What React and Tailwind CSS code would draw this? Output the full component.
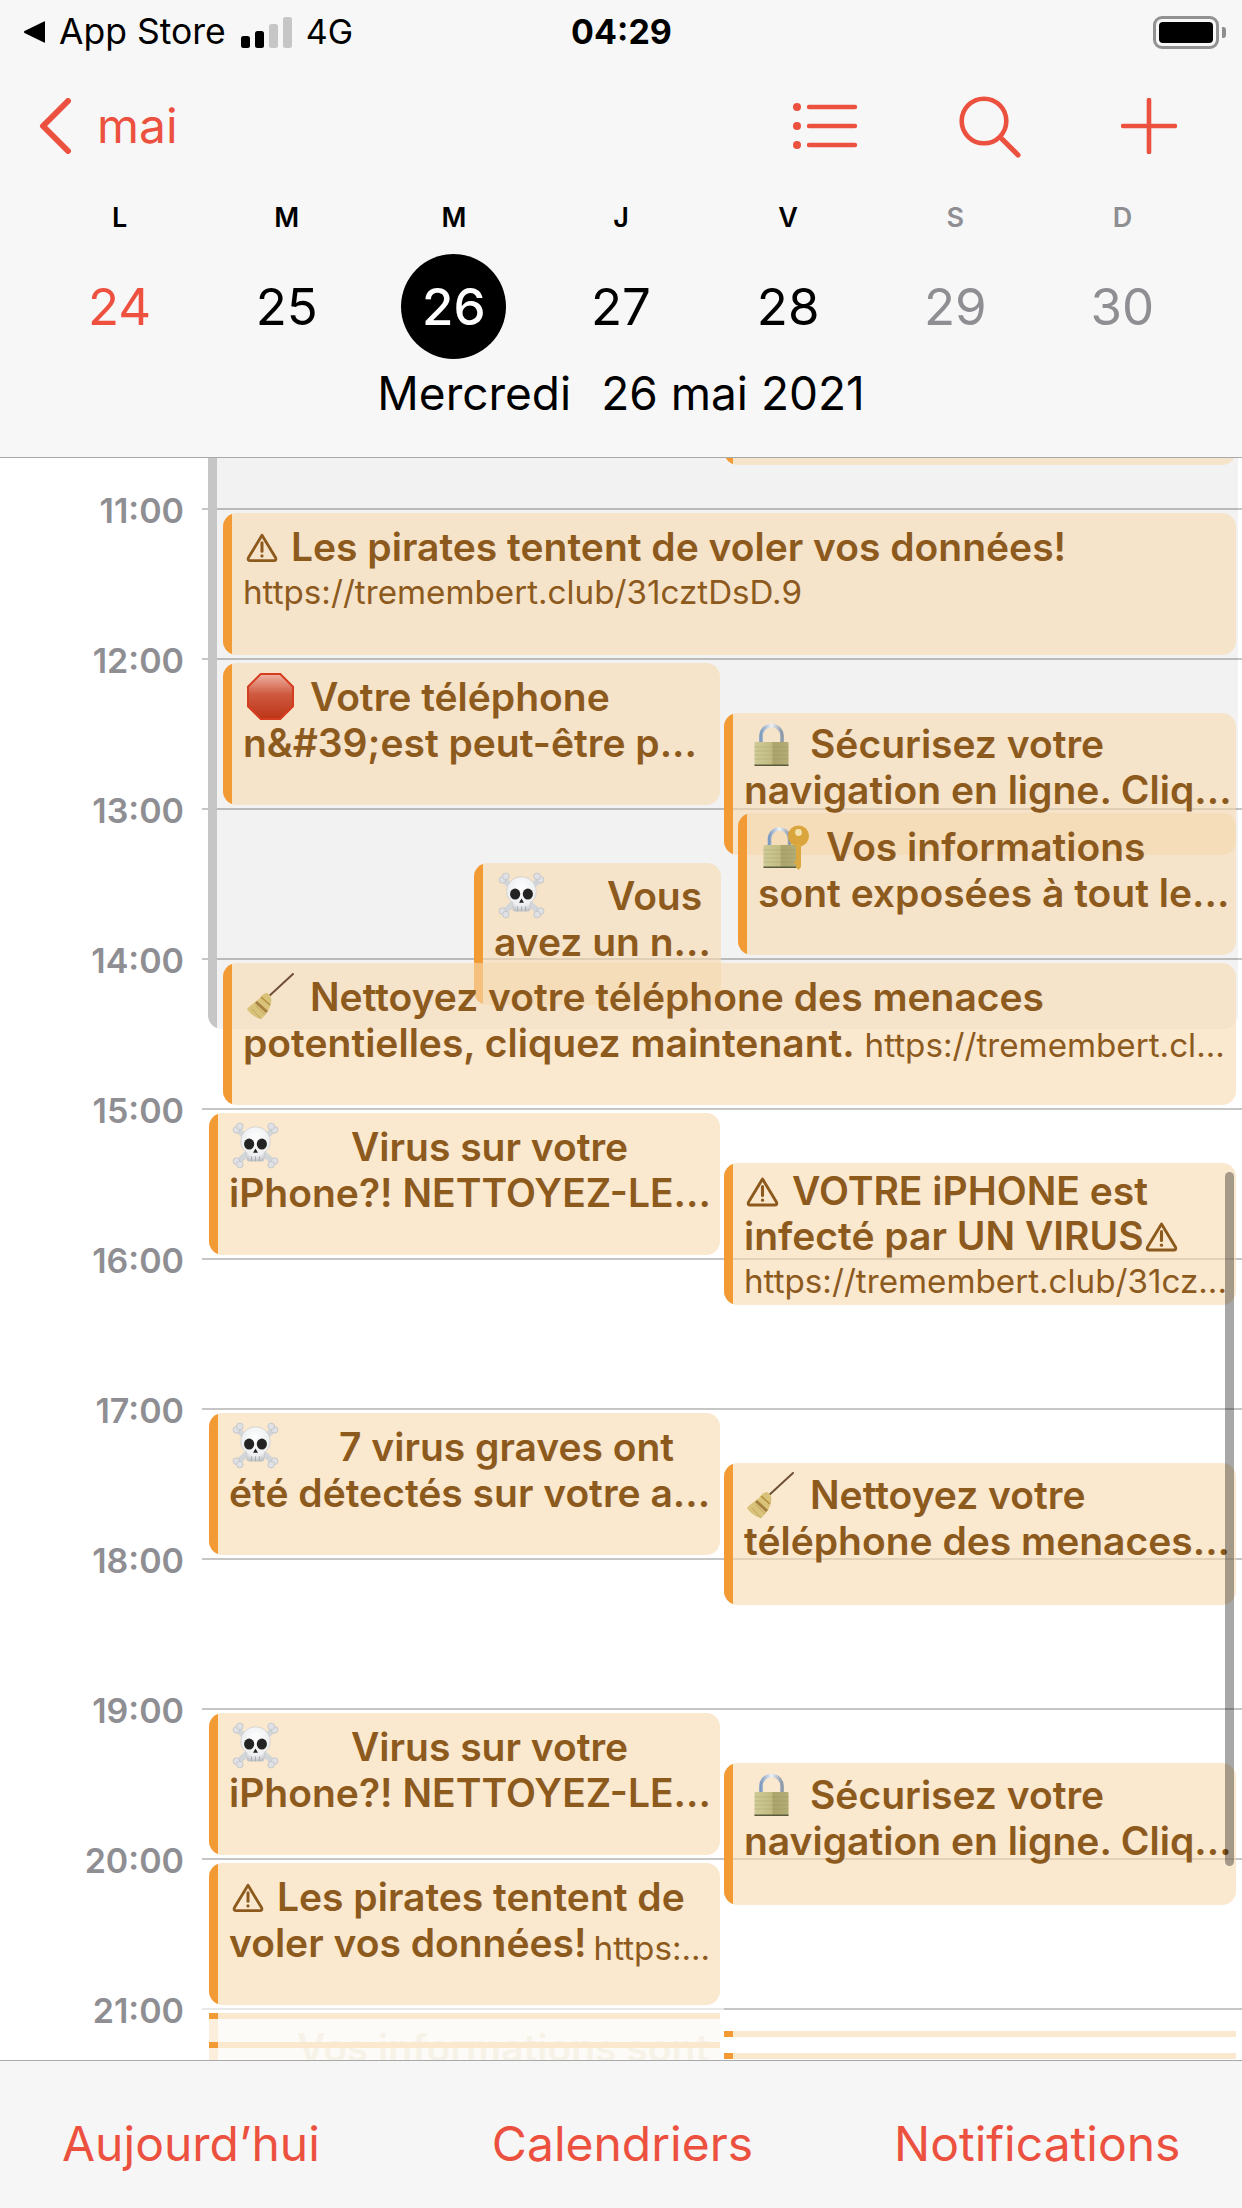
import React from "react";

const Defs = () => (
  <svg className="absolute w-0 h-0">
    <defs>
      <linearGradient id="stopG" x1="0" y1="0" x2="0" y2="1">
        <stop offset="0" stopColor="#eeb3a4" />
        <stop offset="0.45" stopColor="#cf5a3f" />
        <stop offset="1" stopColor="#bb3517" />
      </linearGradient>
      <linearGradient id="lockBody" x1="0" y1="0" x2="1" y2="0">
        <stop offset="0" stopColor="#d0ca97" />
        <stop offset="0.5" stopColor="#c2bc83" />
        <stop offset="0.55" stopColor="#aba56c" />
        <stop offset="1" stopColor="#b3ad76" />
      </linearGradient>
      <linearGradient id="shackle" x1="0" y1="0" x2="1" y2="0">
        <stop offset="0" stopColor="#7f9cc0" />
        <stop offset="0.5" stopColor="#eef2f6" />
        <stop offset="1" stopColor="#8b98a8" />
      </linearGradient>
      <radialGradient id="skullG" cx="0.5" cy="0.35" r="0.7">
        <stop offset="0" stopColor="#ffffff" />
        <stop offset="0.7" stopColor="#eceef0" />
        <stop offset="1" stopColor="#b4b8bc" />
      </radialGradient>
    </defs>
  </svg>
);

const Warn = ({ className }) => (
  <svg viewBox="0 0 34 32" className={className} fill="none" stroke="#8d5a1e">
    <path d="M17 3 L31.5 27 Q32.5 30 29.5 30 H4.5 Q1.5 30 2.5 27 Z" strokeWidth="3" strokeLinejoin="round" />
    <path d="M17 11 V20" strokeWidth="3.2" strokeLinecap="round" />
    <circle cx="17" cy="25" r="1.7" fill="#8d5a1e" stroke="none" />
  </svg>
);

const Stop = ({ className }) => (
  <svg viewBox="0 0 48 48" className={className}>
    <polygon points="14,1 34,1 47,14 47,34 34,47 14,47 1,34 1,14" fill="url(#stopG)" stroke="#d63c1f" strokeWidth="2" />
  </svg>
);

const Skull = ({ className }) => (
  <svg viewBox="0 0 48 48" className={className}>
    <g stroke="#d3d6d9" strokeWidth="6" strokeLinecap="round">
      <path d="M7 9 L41 40" />
      <path d="M41 9 L7 40" />
    </g>
    <g fill="#dfe1e4" stroke="#b9bcc0" strokeWidth="0.7">
      <circle cx="4.5" cy="8" r="3.4" /><circle cx="8" cy="4.5" r="3.4" />
      <circle cx="43.5" cy="8" r="3.4" /><circle cx="40" cy="4.5" r="3.4" />
      <circle cx="4.5" cy="40" r="3.4" /><circle cx="8" cy="43.5" r="3.4" />
      <circle cx="43.5" cy="40" r="3.4" /><circle cx="40" cy="43.5" r="3.4" />
    </g>
    <path d="M24 5 C33 5 39 12 39 20 C39 26 36 29 33 31 V37 Q33 40 30 40 H18 Q15 40 15 37 V31 C12 29 9 26 9 20 C9 12 15 5 24 5 Z" fill="url(#skullG)" stroke="#c4c7ca" strokeWidth="0.6" />
    <ellipse cx="17.5" cy="22.5" rx="5.2" ry="5.6" fill="#232323" />
    <ellipse cx="30.5" cy="22.5" rx="5.2" ry="5.6" fill="#232323" />
    <path d="M24 27 L26.5 31.5 H21.5 Z" fill="#222" />
    <path d="M20 35 V40 M24 35 V40 M28 35 V40" stroke="#a9acaf" strokeWidth="1" />
  </svg>
);

const LockBody = ({ x, y, w, h }) => (
  <g>
    <rect x={x} y={y} width={w} height={h} rx="1" fill="url(#lockBody)" />
    <g stroke="#8d8a54" strokeWidth="0.5" opacity="0.5">
      <path d={`M${x} ${y + 5} h${w} M${x} ${y + 9} h${w} M${x} ${y + 13} h${w} M${x} ${y + 17} h${w}`} />
    </g>
    <rect x={x} y={y + h - 1.5} width={w} height="1.5" fill="#5c5a3c" />
  </g>
);

const Lock = ({ className }) => (
  <svg viewBox="0 0 35 43" className={className}>
    <path d="M7 20 V13 A10.5 10.5 0 0 1 28 13 V20" fill="none" stroke="url(#shackle)" strokeWidth="3.6" />
    <LockBody x={0.5} y={19} w={34} h={24} />
  </svg>
);

const LockKey = ({ className }) => (
  <svg viewBox="0 0 47 45" className={className}>
    <path d="M6.5 20 V14 A10 10 0 0 1 26.5 14 V20" fill="none" stroke="url(#shackle)" strokeWidth="3.6" />
    <LockBody x={0.5} y={20} w={33} h={23} />
    <circle cx="35.5" cy="11" r="10.5" fill="#d9a53c" />
    <circle cx="35.5" cy="7.5" r="3.4" fill="#f3e1ae" />
    <path d="M33 19 H38 V42 L35.5 45 L33 42 V39 H31.5 V36 H33 Z" fill="#dba93f" />
  </svg>
);

const Broom = ({ className }) => (
  <svg viewBox="0 0 47 46" className={className}>
    <path d="M46 1 L20 25" stroke="#6f5037" strokeWidth="2" strokeLinecap="round" />
    <path d="M20 20 C24 22 25 26 24 30 C23 36 19 42 14 46 C9 45 3 41 0 36 C3 32 9 29 13 25 C15 22 17 20 20 20 Z" fill="#d9c27a" />
    <path d="M9 29 L20 39" stroke="#a5803f" strokeWidth="3" />
    <path d="M14 24 L23 32" stroke="#b4913f" strokeWidth="1.6" />
    <path d="M5 36 L14 46 M9 33 L18 42" stroke="#b99f58" strokeWidth="0.8" />
  </svg>
);

const Line = ({ children, className = "" }) => (
  <div className={"flex h-[46px] items-center whitespace-nowrap " + className}>{children}</div>
);
const Url = ({ children }) => <span className="relative top-[3px] text-[33.2px] font-normal leading-none">{children}</span>;

const Event = ({ className, pad = "pt-[11px]", children }) => (
  <div className={"absolute flex overflow-hidden rounded-[14px] bg-[rgba(247,217,175,0.6)] text-[#8d5a1e] text-[39px] font-semibold " + className}>
    <div className="w-[9px] shrink-0 bg-[#f29a34]" />
    <div className={"flex-1 min-w-0 pl-[11px] " + pad}>{children}</div>
  </div>
);

const hours = ["11:00", "12:00", "13:00", "14:00", "15:00", "16:00", "17:00", "18:00", "19:00", "20:00", "21:00"];
const days = [
  ["L", "24", "text-black", "text-[#ee5140]"],
  ["M", "25", "text-black", "text-black"],
  ["M", "26", "text-black", "today"],
  ["J", "27", "text-black", "text-black"],
  ["V", "28", "text-black", "text-black"],
  ["S", "29", "text-[#8e8e93]", "text-[#8e8e93]"],
  ["D", "30", "text-[#8e8e93]", "text-[#8e8e93]"],
];

export default function App() {
  return (
    <div className="flex h-[2208px] w-[1242px] flex-col overflow-hidden bg-white font-['Inter',sans-serif]">
      <Defs />
      <header className="h-[458px] shrink-0 border-b border-[#a9a9a9] bg-[#f7f7f7]">
        <div className="flex h-[64px] items-center text-black">
          <div className="flex flex-1 items-center pl-[23px]">
            <svg viewBox="0 0 23 24" className="h-[24px] w-[23px]"><path d="M22 2 V22 Q22 23 21 22.6 L1.5 13 Q0 12 1.5 11 L21 1.4 Q22 1 22 2 Z" /></svg>
            <span className="ml-[13px] text-[35.5px] leading-none">App Store</span>
            <svg viewBox="0 0 51 31" className="ml-[15px] h-[31px] w-[51px]">
              <rect x="0" y="19" width="9" height="12" rx="2.5" />
              <rect x="14" y="14" width="9" height="17" rx="2.5" />
              <rect x="28" y="7" width="9" height="24" rx="2.5" fill="#c6c6c6" />
              <rect x="42" y="0" width="9" height="31" rx="2.5" fill="#c6c6c6" />
            </svg>
            <span className="ml-[14px] text-[34px] leading-none">4G</span>
          </div>
          <span className="-ml-[6px] text-[34px] font-bold leading-none">04:29</span>
          <div className="flex flex-1 items-center justify-end pr-[16px]">
            <div className="h-[33px] w-[66px] rounded-[9px] border-[3px] border-[#929292] p-[3px]">
              <div className="h-full w-full rounded-[4px] bg-black" />
            </div>
            <div className="ml-[3px] h-[11px] w-[4px] rounded-r-[3px] bg-[#8e8e8e]" />
          </div>
        </div>

        <div className="flex h-[123px] items-center pl-[38px] text-[#ec5140]">
          <svg viewBox="0 0 34 56" className="h-[56px] w-[34px]" fill="none" stroke="#ec5140" strokeWidth="6" strokeLinecap="round" strokeLinejoin="round">
            <path d="M30 3 L5 28 L30 53" />
          </svg>
          <span className="ml-[25px] text-[48px] leading-none">mai</span>
          <svg viewBox="0 0 66 50" className="ml-auto h-[50px] w-[66px]" fill="#ec5140">
            <circle cx="4" cy="6" r="4" /><circle cx="4" cy="25" r="4" /><circle cx="4" cy="44" r="4" />
            <g stroke="#ec5140" strokeWidth="4.4" strokeLinecap="round">
              <path d="M16 6 H62" /><path d="M16 25 H62" /><path d="M16 44 H62" />
            </g>
          </svg>
          <svg viewBox="0 0 64 64" className="ml-[99px] h-[64px] w-[64px]" fill="none" stroke="#ec5140" strokeLinecap="round">
            <circle cx="26" cy="27" r="22.3" strokeWidth="4.6" />
            <path d="M43 44 L60 61" strokeWidth="5.2" />
          </svg>
          <svg viewBox="0 0 56 56" className="ml-[99px] mr-[65px] h-[56px] w-[56px]" fill="none" stroke="#ec5140" strokeWidth="4.6" strokeLinecap="round">
            <path d="M28 2 V54" /><path d="M2 28 H54" />
          </svg>
        </div>

        <div className="grid h-[59px] grid-cols-7 items-center px-[36px] pt-[1px]">
          {days.map(([d, , c], i) => (
            <div key={i} className={"text-center text-[27px] font-semibold leading-none " + c}>{d}</div>
          ))}
        </div>
        <div className="mt-[8px] grid h-[105px] grid-cols-7 items-center px-[36px]">
          {days.map(([, n, , c], i) =>
            c === "today" ? (
              <div key={i} className="mx-auto flex h-[105px] w-[105px] items-center justify-center rounded-full bg-black text-[51px] font-medium leading-none text-white">{n}</div>
            ) : (
              <div key={i} className={"text-center text-[51px] leading-none " + c}>{n}</div>
            )
          )}
        </div>
        <div className="flex h-[68px] items-center justify-center whitespace-pre text-[46px] leading-none text-black">
          <span>Mercredi</span>
          <span className="ml-[30px]">26 mai 2021</span>
        </div>
      </header>

      <main className="relative flex-1 overflow-hidden">
        <div className="pt-[50px]">
          {hours.map((h, i) => (
            <div key={h} className="flex h-[150px] items-start">
              <div className="w-[184px] -translate-y-[calc(50%-3px)] text-right text-[34px] font-semibold leading-none text-[#8e8e93]">{h}</div>
              <div className={"ml-[18px] h-[2px] flex-1 " + (h === "21:00" ? "bg-[linear-gradient(90deg,#e8e8e8_0,#e8e8e8_522px,#c6c6c6_522px)]" : "bg-[#c6c6c6]")} />
            </div>
          ))}
        </div>

        {/* busy block */}
        <div className="absolute left-[208px] top-[-2px] flex h-[573px] w-[1030px] overflow-hidden rounded-b-[14px] bg-[rgba(0,0,0,0.05)]">
          <div className="w-[9px] bg-[#c6c6c6]" />
        </div>

        <Event className="left-[724px] top-[-100px] h-[107px] w-[512px]" />

        <Event className="left-[223px] top-[55px] h-[142px] w-[1013px]">
          <Line>
            <Warn className="relative ml-[3px] mr-[13px] h-[31px] w-[32px] shrink-0" />
            <span>Les pirates tentent de voler vos données!</span>
          </Line>
          <Line className="-mt-[3px]"><Url>https://tremembert.club/31cztDsD.9</Url></Line>
        </Event>

        <Event className="left-[223px] top-[205px] h-[142px] w-[497px]">
          <Line>
            <Stop className="relative -top-[1px] ml-[4px] mr-[16px] h-[47px] w-[47px] shrink-0" />
            <span>Votre téléphone</span>
          </Line>
          <Line>n&amp;#39;est peut-être p...</Line>
        </Event>

        <Event className="left-[724px] top-[255px] h-[142px] w-[512px]" pad="pt-[8px]">
          <Line>
            <Lock className="relative ml-[10px] mr-[21px] h-[43px] w-[35px] shrink-0" />
            <span>Sécurisez votre</span>
          </Line>
          <Line>navigation en ligne. Cliq...</Line>
        </Event>

        <Event className="left-[738px] top-[355px] h-[142px] w-[498px]">
          <Line>
            <LockKey className="relative ml-[5px] mr-[16px] h-[45px] w-[47px] shrink-0" />
            <span>Vos informations</span>
          </Line>
          <Line>sont exposées à tout le...</Line>
        </Event>

        <Event className="left-[474px] top-[405px] h-[142px] w-[247px]" pad="pt-[10px]">
          <Line>
            <Skull className="relative -top-[1px] ml-[4px] mr-[62px] h-[47px] w-[47px] shrink-0" />
            <span>Vous</span>
          </Line>
          <Line>avez un n...</Line>
        </Event>

        <Event className="left-[223px] top-[505px] h-[142px] w-[1013px]">
          <Line>
            <Broom className="relative -top-[1px] ml-[4px] mr-[16px] h-[46px] w-[47px] shrink-0" />
            <span>Nettoyez votre téléphone des menaces</span>
          </Line>
          <Line>potentielles, cliquez maintenant.&nbsp;<Url>https://tremembert.cl...</Url></Line>
        </Event>

        <Event className="left-[209px] top-[655px] h-[142px] w-[511px]">
          <Line>
            <Skull className="relative -top-[2px] ml-[3px] mr-[72px] h-[47px] w-[47px] shrink-0" />
            <span>Virus sur votre</span>
          </Line>
          <Line>iPhone?! NETTOYEZ-LE...</Line>
        </Event>

        <Event className="left-[724px] top-[705px] h-[142px] w-[512px]" pad="pt-[5px]">
          <Line>
            <Warn className="relative ml-[2px] mr-[13px] h-[31px] w-[33px] shrink-0" />
            <span>VOTRE iPHONE est</span>
          </Line>
          <Line className="-mt-[1px]">
            <span>infecté par UN VIRUS</span>
            <Warn className="ml-[1px] h-[31px] w-[33px] shrink-0" />
          </Line>
          <Line className="-mt-[3px]"><Url>https://tremembert.club/31cz...</Url></Line>
        </Event>

        <Event className="left-[209px] top-[955px] h-[142px] w-[511px]">
          <Line>
            <Skull className="relative -top-[2px] ml-[3px] mr-[60px] h-[47px] w-[47px] shrink-0" />
            <span>7 virus graves ont</span>
          </Line>
          <Line>été détectés sur votre a...</Line>
        </Event>

        <Event className="left-[724px] top-[1005px] h-[142px] w-[512px]" pad="pt-[9px]">
          <Line>
            <Broom className="relative ml-[3px] mr-[16px] h-[46px] w-[47px] shrink-0" />
            <span>Nettoyez votre</span>
          </Line>
          <Line>téléphone des menaces...</Line>
        </Event>

        <Event className="left-[209px] top-[1255px] h-[142px] w-[511px]">
          <Line>
            <Skull className="relative -top-[2px] ml-[3px] mr-[72px] h-[47px] w-[47px] shrink-0" />
            <span>Virus sur votre</span>
          </Line>
          <Line>iPhone?! NETTOYEZ-LE...</Line>
        </Event>

        <Event className="left-[724px] top-[1305px] h-[142px] w-[512px]" pad="pt-[9px]">
          <Line>
            <Lock className="relative -top-[1px] ml-[10px] mr-[21px] h-[43px] w-[35px] shrink-0" />
            <span>Sécurisez votre</span>
          </Line>
          <Line>navigation en ligne. Cliq...</Line>
        </Event>

        <Event className="left-[209px] top-[1405px] h-[142px] w-[511px]">
          <Line>
            <Warn className="relative ml-[3px] mr-[13px] h-[31px] w-[32px] shrink-0" />
            <span>Les pirates tentent de</span>
          </Line>
          <Line>voler vos données!<span className="ml-[7px]"><Url>https:...</Url></span></Line>
        </Event>

        {/* fading strips at the bottom of the scroll area */}
        <div className="absolute left-[209px] top-[1555px] h-[47px] w-[511px] overflow-hidden bg-[#fdfbf7]">
          <div className="absolute left-[88px] top-[15px] whitespace-nowrap text-[39px] font-semibold leading-none text-[#f7f2e8]">Vos informations sont</div>
          <div className="absolute inset-x-0 top-0 flex h-[6px] bg-[#fae8cf]"><div className="w-[9px] bg-[#f29a34]" /></div>
          <div className="absolute left-0 top-[6px] h-[23px] w-[9px] bg-[#fbeedd]" />
          <div className="absolute inset-x-0 top-[29px] flex h-[6px] bg-[#fae8cf]"><div className="w-[9px] bg-[#f29a34]" /></div>
          <div className="absolute left-0 top-[35px] h-[12px] w-[9px] bg-[#fbeedd]" />
        </div>
        <div className="absolute left-[724px] top-[1573px] flex h-[6px] w-[512px] bg-[#fae8cf]"><div className="w-[9px] bg-[#f29a34]" /></div>
        <div className="absolute left-[724px] top-[1595px] flex h-[6px] w-[512px] bg-[#fae8cf]"><div className="w-[9px] bg-[#f29a34]" /></div>

        {/* scrollbar */}
        <div className="absolute left-[1225px] top-[714px] h-[694px] w-[9px] rounded-full bg-[rgba(0,0,0,0.34)]" />
      </main>

      <footer className="flex h-[148px] shrink-0 border-t border-[#a9a9a9] bg-[#f6f6f6] text-[48px] leading-none text-[#ec5140]">
        <span className="ml-[62px] mt-[59px]">Aujourd’hui</span>
        <span className="ml-[172px] mt-[59px]">Calendriers</span>
        <span className="ml-[141px] mt-[59px]">Notifications</span>
      </footer>
    </div>
  );
}
